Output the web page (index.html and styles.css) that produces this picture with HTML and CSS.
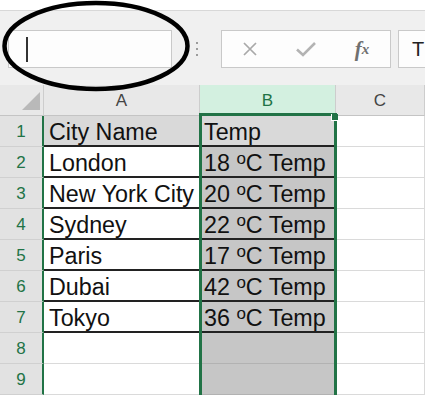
FILE: index.html
```html
<!DOCTYPE html>
<html lang="en">
<head>
    <meta charset="UTF-8">
    <title>Sheet</title>
    <link rel="stylesheet" href="styles.css">
</head>
<body>
    <div class="top-strip"></div>
    <div class="toolbar">
        <div class="name-box"><span class="caret"></span></div>
        <div class="grip"><span></span><span></span><span></span></div>
        <div class="fx-box">
            <span class="fx-btn">
                <svg width="16" height="16" viewBox="0 0 16 16"><path d="M2 2 L14 14 M14 2 L2 14" stroke="#a9a9a9" stroke-width="1.7" fill="none"/></svg>
            </span>
            <span class="fx-btn">
                <svg width="22" height="16" viewBox="0 0 22 16"><path d="M2 8.5 L8 14 L20 2" stroke="#b3b3b3" stroke-width="2.6" fill="none"/></svg>
            </span>
            <span class="fx-btn fx-label"><i>f</i><sub>x</sub></span>
        </div>
        <div class="formula">T</div>
    </div>

    <div class="sheet">
        <div class="corner">
            <svg width="44" height="31" viewBox="0 0 44 31"><path d="M40 7 L40 25 L22 25 Z" fill="#b9b9b9"/></svg>
        </div>
        <div class="col-head">A</div>
        <div class="col-head selected">B</div>
        <div class="col-head">C</div>

        <div class="row-head">1</div>
        <div class="cell bordered header-fill">City Name</div>
        <div class="cell sel bordered active">Temp</div>
        <div class="cell"></div>

        <div class="row-head">2</div>
        <div class="cell bordered">London</div>
        <div class="cell sel bordered">18 <sup>o</sup>C Temp</div>
        <div class="cell"></div>

        <div class="row-head">3</div>
        <div class="cell bordered">New York City</div>
        <div class="cell sel bordered">20 <sup>o</sup>C Temp</div>
        <div class="cell"></div>

        <div class="row-head">4</div>
        <div class="cell bordered">Sydney</div>
        <div class="cell sel bordered">22 <sup>o</sup>C Temp</div>
        <div class="cell"></div>

        <div class="row-head">5</div>
        <div class="cell bordered">Paris</div>
        <div class="cell sel bordered">17 <sup>o</sup>C Temp</div>
        <div class="cell"></div>

        <div class="row-head">6</div>
        <div class="cell bordered">Dubai</div>
        <div class="cell sel bordered">42 <sup>o</sup>C Temp</div>
        <div class="cell"></div>

        <div class="row-head">7</div>
        <div class="cell bordered">Tokyo</div>
        <div class="cell sel bordered">36 <sup>o</sup>C Temp</div>
        <div class="cell"></div>

        <div class="row-head">8</div>
        <div class="cell"></div>
        <div class="cell sel"></div>
        <div class="cell"></div>

        <div class="row-head">9</div>
        <div class="cell"></div>
        <div class="cell sel"></div>
        <div class="cell"></div>

        <div class="selection"><span class="handle"></span></div>
    </div>

    <svg class="callout" width="200" height="96" viewBox="0 0 200 96">
        <ellipse cx="96" cy="46" rx="91.5" ry="43" fill="none" stroke="#000" stroke-width="4.5"/>
    </svg>
</body>
</html>
```

FILE: styles.css
```css
body {
    margin: 0;
    width: 425px;
    height: 397px;
    overflow: hidden;
    position: relative;
    font-family: 'Liberation Sans', Arial, sans-serif;
    background-color: #fff;
    color: #111;
}
.top-strip {
    height: 10px;
    background-color: #fff;
    border-bottom: 1px solid #d8d8d8;
}
.toolbar {
    height: 74px;
    box-sizing: border-box;
    padding-top: 19px;
    display: flex;
    align-items: flex-start;
    background-color: #f0f0f0;
}
.name-box {
    margin-left: 8px;
    width: 164px;
    height: 38px;
    box-sizing: border-box;
    border: 1px solid #c9c9c9;
    background-color: #fdfdfd;
    display: flex;
    align-items: center;
}
.caret {
    margin-left: 17px;
    width: 2px;
    height: 25px;
    background-color: #333;
}
.grip {
    margin-left: 24px;
    margin-top: 12px;
    display: flex;
    flex-direction: column;
    gap: 4px;
}
.grip span {
    width: 2px;
    height: 2px;
    background-color: #9c9c9c;
}
.fx-box {
    margin-left: 23px;
    width: 170px;
    height: 38px;
    box-sizing: border-box;
    border: 1px solid #c9c9c9;
    background-color: #fdfdfd;
    display: flex;
    align-items: center;
}
.fx-btn {
    width: 56px;
    display: flex;
    justify-content: center;
    align-items: center;
}
.fx-label {
    font-family: 'Liberation Serif', 'Times New Roman', serif;
    color: #707070;
    font-weight: bold;
    font-size: 21px;
}
.fx-label sub {
    font-size: 15px;
    font-style: italic;
    vertical-align: -3px;
}
.formula {
    margin-left: 7px;
    flex: 1;
    height: 38px;
    box-sizing: border-box;
    border: 1px solid #c9c9c9;
    border-right: none;
    background-color: #fdfdfd;
    padding-left: 13px;
    font-size: 20px;
    line-height: 36px;
    color: #222;
}

.sheet {
    position: relative;
    display: grid;
    grid-template-columns: 44px 156px 136px 89px;
    grid-template-rows: repeat(10, 31px);
}
.corner, .col-head {
    background-color: #e8e8e8;
    border-bottom: 1px solid #c4c4c4;
    border-right: 1px solid #cdcdcd;
    box-sizing: border-box;
}
.col-head {
    font-size: 17px;
    color: #444;
    text-align: center;
    line-height: 31px;
}
.col-head.selected {
    background-color: #d3f0e0;
    color: #217346;
}
.row-head {
    background-color: #e2e2e2;
    border-bottom: 1px solid #d0d0d0;
    border-right: 2px solid #217346;
    box-sizing: border-box;
    text-align: center;
    font-size: 17px;
    line-height: 31px;
    color: #217346;
}
.cell {
    box-sizing: border-box;
    border-bottom: 1px solid #dadada;
    border-right: 1px solid #dadada;
    padding: 2px 0 0 5px;
    font-size: 23.3px;
    line-height: 29px;
    white-space: nowrap;
    overflow: hidden;
}
.cell.sel {
    background-color: #c6c6c6;
    border-bottom-color: #b2b2b2;
    padding-left: 4px;
}
.cell.bordered {
    border-bottom: 2px solid #222;
}
.cell.header-fill {
    background-color: #d9d9d9;
}
.cell.active {
    background-color: #d9d9d9;
}
.cell sup {
    font-size: 17px;
    vertical-align: 7px;
    line-height: 0;
}
.selection {
    position: absolute;
    grid-area: 2 / 3 / 11 / 4;
    top: -3px;
    left: -1px;
    right: -1px;
    bottom: 0;
    border: 3px solid #217346;
    border-bottom: none;
}
.handle {
    position: absolute;
    top: -2px;
    right: -4px;
    width: 6px;
    height: 6px;
    background-color: #217346;
    border: 1px solid #fff;
    border-top: none;
    border-right: none;
}
.callout {
    position: absolute;
    top: 0;
    left: 0;
}
```
